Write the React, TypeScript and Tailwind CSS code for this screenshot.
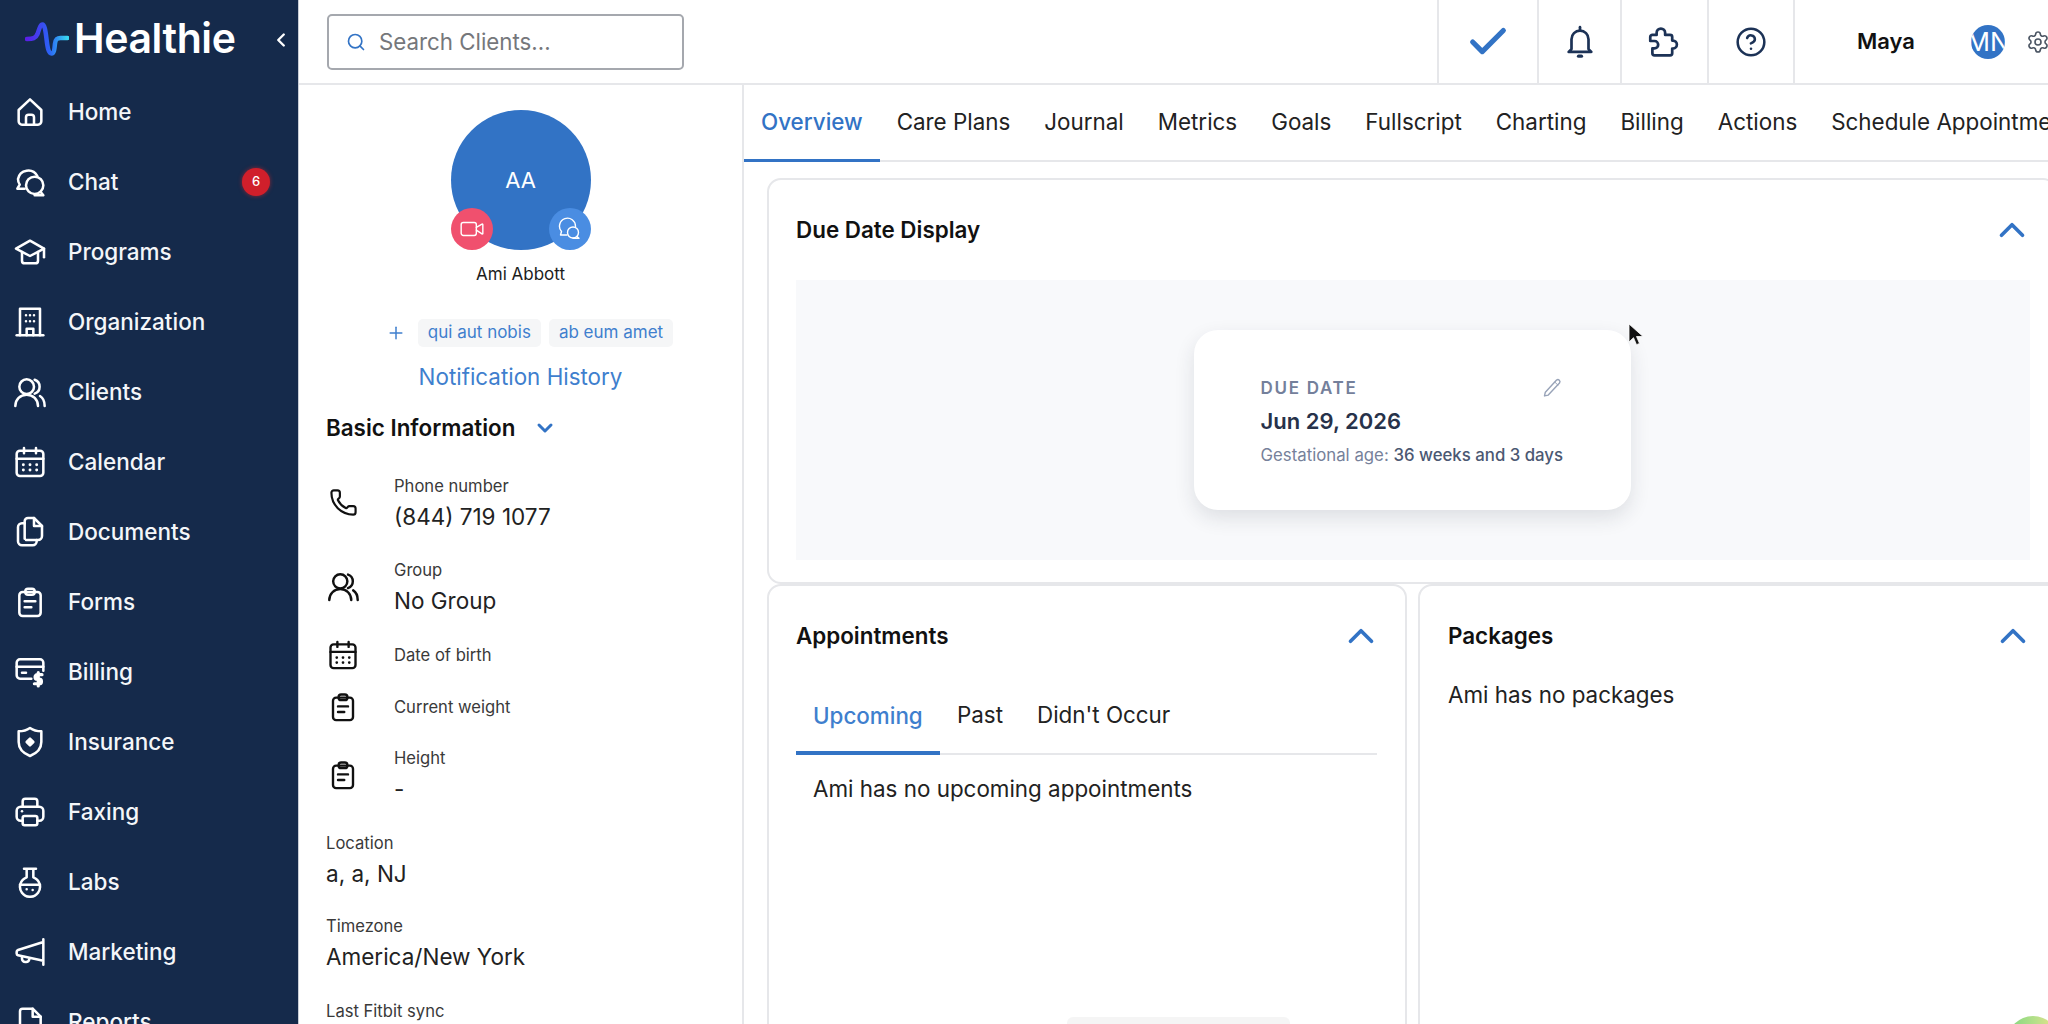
import React from 'react';
import { Check, ChevronDown, ChevronLeft, ChevronUp, CircleHelp, Phone, Plus, Search, Settings, Video } from 'lucide-react';

type IconProps = { className?: string };

const Svg: React.FC<IconProps & { children: React.ReactNode }> = ({ className, children }) => (
  <svg viewBox="0 0 24 24" fill="none" stroke="currentColor" strokeWidth={1.9} strokeLinecap="round" strokeLinejoin="round" className={className}>
    {children}
  </svg>
);

const HomeIcon = (p: IconProps) => (
  <Svg {...p}>
    <path d="M3.5 10.5 12 2.500l8.500 8V19a2.500 2.500 0 0 1-2.500 2.500H6A2.500 2.500 0 0 1 3.500 19z" />
    <path d="M9 21.500V16a2 2 0 0 1 2-2h2a2 2 0 0 1 2 2v5.500" />
  </Svg>
);
const ChatIcon = (p: IconProps) => (
  <Svg {...p}>
    <path d="M17.500 7.500A7.800 7.800 0 0 0 3 9.800c0 1.600.5 3 1.300 4.200L2.500 17H8" />
    <circle cx="15.500" cy="14.500" r="6.500" />
    <path d="M20 19.500l2 2.500h-6.500" />
  </Svg>
);
const ProgramsIcon = (p: IconProps) => (
  <Svg {...p}>
    <path d="M12 3.500 1.500 9.500 12 15l10.500-5.500z" />
    <path d="M6 12v6.500a2 2 0 0 0 2 2h8a2 2 0 0 0 2-2V12" />
    <path d="M22.500 9.500V16" />
  </Svg>
);
const BuildingIcon = (p: IconProps) => (
  <Svg {...p}>
    <path d="M2 22h20" />
    <path d="M4.500 22V2h15v20" />
    <path d="M9.500 22v-5h5v5" />
    <path d="M9 7h.01M15 7h.01M9 11.500h.01M15 11.500h.01M12 7h.01M12 11.500h.01" />
  </Svg>
);
const UsersIcon = (p: IconProps) => (
  <Svg {...p}>
    <circle cx="9.500" cy="8" r="5.500" />
    <path d="M1 22.500c0-4.800 3.700-8.500 8.500-8.500s8.500 3.700 8.500 8.500" />
    <path d="M15.500 2.800a5.500 5.500 0 0 1 0 10.400" />
    <path d="M19.500 15c2.200 1.400 3.500 4 3.500 7.500" />
  </Svg>
);
const CalendarIcon = (p: IconProps) => (
  <Svg {...p}>
    <rect x="2" y="3.500" width="20" height="19" rx="2.500" />
    <path d="M2 9.500h20M7.500 1.500v4M16.500 1.500v4" />
    <path d="M7 14h.01M12 14h.01M17 14h.01M7 18h.01M12 18h.01M17 18h.01" strokeWidth={2.200} />
  </Svg>
);
const DocumentsIcon = (p: IconProps) => (
  <Svg {...p}>
    <path d="M8 17V4a2.500 2.500 0 0 1 2.500-2.500H15l6 6V15a3 3 0 0 1-3 3h-9" />
    <path d="M15 1.500V7.500h6" />
    <path d="M8 5.500H6A3 3 0 0 0 3 8.500V19a3 3 0 0 0 3 3h8a3 3 0 0 0 3-3v-1" />
  </Svg>
);
const ClipboardIcon = (p: IconProps) => (
  <Svg {...p}>
    <rect x="4" y="4.500" width="16" height="18" rx="2.500" />
    <rect x="8.500" y="2" width="7" height="4.500" rx="2" />
    <path d="M8 11.500h8M8 16h5" />
  </Svg>
);
const BillingIcon = (p: IconProps) => (
  <Svg {...p}>
    <path d="M22 11V5a2.500 2.500 0 0 0-2.500-2.500h-15A2.500 2.500 0 0 0 2 5v9.500A2.500 2.500 0 0 0 4.500 17H13" />
    <path d="M2 8h20M6 12.500h3" />
    <path d="M21 14h-3.500a1.700 1.700 0 0 0 0 3.400h1.400a1.700 1.700 0 0 1 0 3.400h-3.600M18.200 12.500v10" strokeWidth={2.400} />
  </Svg>
);
const ShieldIcon = (p: IconProps) => (
  <Svg {...p}>
    <path d="M12 1.500c2.500 1.800 5.500 2.500 8.500 2.500v8c0 5-3.500 8.500-8.500 10.500C7 20.500 3.500 17 3.500 12V4C6.500 4 9.500 3.300 12 1.500z" />
    <path d="M12 9.500 14.500 12 12 14.500 9.500 12z" fill="currentColor" />
  </Svg>
);
const PrinterIcon = (p: IconProps) => (
  <Svg {...p}>
    <path d="M6.500 8V4a2 2 0 0 1 2-2h7a2 2 0 0 1 2 2v4" />
    <path d="M6.500 18.500H5a3 3 0 0 1-3-3V11a3 3 0 0 1 3-3h14a3 3 0 0 1 3 3v4.500a3 3 0 0 1-3 3h-1.500" />
    <rect x="6.500" y="15" width="11" height="7" rx="1.500" />
    <path d="M6 11.500h.01" />
  </Svg>
);
const FlaskIcon = (p: IconProps) => (
  <Svg {...p}>
    <path d="M7.500 2h9M9.500 2v6.500a7.500 7.500 0 1 0 5 0V2" />
    <path d="M4.500 14h15" />
    <path d="M9.500 17.500h.01M14 18h.01" />
  </Svg>
);
const MegaphoneIcon = (p: IconProps) => (
  <Svg {...p}>
    <path d="M22 2.500v19M22 4.500 3 10.500a1.500 1.500 0 0 0-1 1.400v1.200a1.500 1.500 0 0 0 1 1.400l19 4" />
    <path d="M6 15.500V17a2.500 2.500 0 0 0 2.500 2.500h.5a2.500 2.500 0 0 0 2.500-2" />
  </Svg>
);
const ReportsIcon = (p: IconProps) => (
  <Svg {...p}>
    <path d="M4.500 4a2 2 0 0 1 2-2H14l6 6v12a2 2 0 0 1-2 2H6.500a2 2 0 0 1-2-2z" />
    <path d="M14 2v6h6" />
  </Svg>
);
const BellIcon = (p: IconProps) => (
  <Svg {...p}>
    <path d="M12 1.500v2" />
    <path d="M6 17V10a6 6 0 0 1 12 0v7l2 2H4z" />
    <path d="M11 22h2" strokeWidth={2.400} />
  </Svg>
);
const PuzzleIcon = (p: IconProps) => (
  <Svg {...p}>
    <path d="M7.500 5.500a3 3 0 0 1 6 0V7h3.500A1.500 1.500 0 0 1 18.500 8.500V11h.5a2.800 2.800 0 0 1 0 5.600h-.5V20a1.500 1.500 0 0 1-1.500 1.500H6A1.500 1.500 0 0 1 4.500 20v-3.500H6a2.600 2.600 0 0 0 0-5.200H3V8.500A1.500 1.500 0 0 1 4.500 7h3z" />
  </Svg>
);
const BubblesIcon = (p: IconProps) => (
  <Svg {...p}>
    <path d="M17.500 9.500A8 8 0 1 0 3.500 14.500L2.500 18H9" strokeWidth={1.400} />
    <circle cx="15" cy="15.500" r="5.500" strokeWidth={1.400} />
    <path d="M19 19.500l2 1.800h-6" strokeWidth={1.400} />
  </Svg>
);
const SlimPencilIcon = (p: IconProps) => (
  <Svg {...p}>
    <path d="M17.500 2.500a2.500 2.500 0 0 1 3.500 3.500L7.500 20.500 3 21.500l1-4.500z" strokeWidth={1.700} />
    <path d="M15.500 5l3.500 3.500" strokeWidth={1.200} />
  </Svg>
);

const navItems: { label: string; icon: (p: IconProps) => React.ReactNode; badge?: number }[] = [
  { label: 'Home', icon: HomeIcon },
  { label: 'Chat', icon: ChatIcon, badge: 6 },
  { label: 'Programs', icon: ProgramsIcon },
  { label: 'Organization', icon: BuildingIcon },
  { label: 'Clients', icon: UsersIcon },
  { label: 'Calendar', icon: CalendarIcon },
  { label: 'Documents', icon: DocumentsIcon },
  { label: 'Forms', icon: ClipboardIcon },
  { label: 'Billing', icon: BillingIcon },
  { label: 'Insurance', icon: ShieldIcon },
  { label: 'Faxing', icon: PrinterIcon },
  { label: 'Labs', icon: FlaskIcon },
  { label: 'Marketing', icon: MegaphoneIcon },
  { label: 'Reports', icon: ReportsIcon },
];

const tabs = ['Overview', 'Care Plans', 'Journal', 'Metrics', 'Goals', 'Fullscript', 'Charting', 'Billing', 'Actions', 'Schedule Appointment'];

const Sidebar = () => (
  <aside className="w-[299px] h-[1024px] shrink-0 overflow-hidden bg-[#152a4b] border-r border-[#c9cdd6] text-white">
    <div className="h-[77px] flex items-center pl-[25px] pr-[6px]">
      <svg viewBox="0 0 44 34" className="w-[44px] h-[34px] shrink-0" fill="none">
        <defs>
          <linearGradient id="pulse" x1="0" y1="0" x2="1" y2="0">
            <stop offset="0" stopColor="#5a1fe8" />
            <stop offset="0.55" stopColor="#2b62f5" />
            <stop offset="1" stopColor="#38d6f0" />
          </linearGradient>
        </defs>
        <path d="M2 17c6 0 8.500-.5 10.500-5 2-6 3-9.500 5-9.500s3 6 4 14.500 2 14.500 5 14.500 3-6 3.500-10 2-5.500 5.500-5.500h7" stroke="url(#pulse)" strokeWidth={4.500} strokeLinecap="round" />
      </svg>
      <span className="ml-[5px] text-[41px] leading-none font-semibold tracking-[-0.4px]">Healthie</span>
      <ChevronLeft className="ml-auto w-[22px] h-[22px] mt-[3px]" strokeWidth={2.6} />
    </div>
    <nav>
      {navItems.map(({ label, icon: Icon, badge }) => (
        <div key={label} className="h-[70px] flex items-center pl-[14px] pr-[28px]">
          <Icon className="w-[32px] h-[32px] shrink-0" />
          <span className="ml-[22px] text-[22.5px] font-medium text-[#f4f6f9]">{label}</span>
          {badge && (
            <span className="ml-auto w-[28px] h-[28px] rounded-full bg-[#d01f2b] flex items-center justify-center text-[13px] font-medium shadow-[0_0_4px_rgba(220,38,38,0.6)]">
              {badge}
            </span>
          )}
        </div>
      ))}
    </nav>
  </aside>
);

const TopBar = () => (
  <header className="h-[85px] shrink-0 flex items-stretch border-b-2 border-[#e6e7ea] bg-white">
    <div className="flex-1 flex items-center pl-[28px]">
      <div className="w-[357px] h-[56px] rounded-[5px] border-2 border-[#a5a8ae] flex items-center pl-[17px]">
        <Search className="w-[20px] h-[20px] text-[#3273c5]" strokeWidth={2} />
        <span className="ml-[13px] text-[22.3px] text-[#75777b]">Search Clients...</span>
      </div>
    </div>
    <div className="w-[100px] border-l-2 border-[#e6e7ea] flex items-center justify-center">
      <Check className="w-[46px] h-[46px] text-[#3273c5]" strokeWidth={2.7} />
    </div>
    <div className="w-[83px] border-l-2 border-[#e6e7ea] flex items-center justify-center text-[#1c3256]">
      <BellIcon className="w-[34px] h-[34px]" />
    </div>
    <div className="w-[87px] border-l-2 border-[#e6e7ea] flex items-center justify-center pr-[4px] text-[#1c3256]">
      <PuzzleIcon className="w-[34px] h-[34px]" />
    </div>
    <div className="w-[86px] border-l-2 border-[#e6e7ea] flex items-center justify-center text-[#1c3256]">
      <CircleHelp className="w-[32px] h-[32px]" strokeWidth={1.9} />
    </div>
    <div className="w-[255px] border-l-2 border-[#e6e7ea] flex items-center overflow-hidden">
      <span className="ml-[62px] text-[22px] font-semibold text-[#111]">Maya</span>
      <div className="ml-[56px] w-[34px] h-[34px] shrink-0 rounded-full bg-[#3273c5] overflow-hidden flex items-center justify-center text-[26px] text-white">
        <span className="whitespace-nowrap">MN</span>
      </div>
      <Settings className="ml-[21px] w-[24px] h-[24px] shrink-0 text-[#4b5563]" strokeWidth={1.6} />
    </div>
  </header>
);

const InfoRow = ({ icon, label, value, className }: { icon: React.ReactNode; label: string; value?: string; className: string }) => (
  <div className={`flex items-center ${className}`}>
    <div className="w-[68px] shrink-0">
      <div className="w-[34px] flex justify-center">{icon}</div>
    </div>
    <div>
      <div className="text-[16.6px] leading-[26px] text-[#3a3a3a]">{label}</div>
      {value && <div className="text-[22.5px] leading-[36px] text-[#222]">{value}</div>}
    </div>
  </div>
);

const Field = ({ label, value, className }: { label: string; value?: string; className?: string }) => (
  <div className={className}>
    <div className="text-[16.6px] leading-[26px] text-[#3a3a3a]">{label}</div>
    {value && <div className="text-[22.5px] leading-[36px] text-[#222]">{value}</div>}
  </div>
);

const ClientPanel = () => (
  <section className="w-[445px] shrink-0 border-r-2 border-[#e6e7ea] overflow-hidden bg-white">
    <div className="pt-[25px] flex flex-col items-center">
      <div className="relative w-[140px] h-[140px] rounded-full bg-[#3273c5] flex items-center justify-center text-[22px] text-white">
        AA
        <span className="absolute left-0 bottom-0 w-[42px] h-[42px] rounded-full bg-[#f0506e] flex items-center justify-center">
          <Video className="w-[26px] h-[26px]" strokeWidth={1.3} />
        </span>
        <span className="absolute right-0 bottom-0 w-[42px] h-[42px] rounded-full bg-[#4a8de2] flex items-center justify-center">
          <BubblesIcon className="w-[24px] h-[24px]" />
        </span>
      </div>
      <div className="mt-[12px] text-[17px] leading-[24px] text-[#1c1c1c]">Ami Abbott</div>
      <div className="mt-[33px] flex items-center gap-[8px] pl-[18px] text-[17px] text-[#3f7fce]">
        <Plus className="w-[20px] h-[20px] mr-[4px]" strokeWidth={1.8} />
        <span className="h-[28px] px-[10px] rounded-[5px] bg-[#f5f6f7] flex items-center">qui aut nobis</span>
        <span className="h-[28px] px-[10px] rounded-[5px] bg-[#f5f6f7] flex items-center">ab eum amet</span>
      </div>
      <div className="mt-[14px] text-[22.4px] leading-[32px] text-[#3f7fce]">Notification History</div>
    </div>
    <div className="pl-[27px]">
      <div className="mt-[19px] flex items-center text-[22.4px] leading-[32px] font-semibold text-[#111]">
        Basic Information
        <ChevronDown className="ml-[18px] w-[24px] h-[24px] text-[#3273c5]" strokeWidth={3} />
      </div>
      <InfoRow className="mt-[29px]" icon={<Phone className="w-[29px] h-[29px] -mt-[4px] text-[#111]" strokeWidth={1.8} />} label="Phone number" value="(844) 719 1077" />
      <InfoRow className="mt-[22px]" icon={<UsersIcon className="w-[31px] h-[31px] -mt-[3px] text-[#111]" />} label="Group" value="No Group" />
      <InfoRow className="mt-[21px]" icon={<CalendarIcon className="w-[30px] h-[30px] text-[#111]" />} label="Date of birth" />
      <InfoRow className="mt-[22px]" icon={<ClipboardIcon className="w-[30px] h-[30px] text-[#111]" />} label="Current weight" />
      <InfoRow className="mt-[23px]" icon={<ClipboardIcon className="w-[30px] h-[30px] -mt-[3px] text-[#111]" />} label="Height" value="-" />
      <Field className="mt-[23px]" label="Location" value="a, a, NJ" />
      <Field className="mt-[21px]" label="Timezone" value="America/New York" />
      <Field className="mt-[23px]" label="Last Fitbit sync" />
    </div>
  </section>
);

const CardHeader = ({ title }: { title: string }) => (
  <div className="flex items-center justify-between h-[32px]">
    <h2 className="text-[22.4px] leading-[32px] font-semibold text-[#111]">{title}</h2>
    <ChevronUp className="w-[42px] h-[42px] -mr-[5px] text-[#3273c5]" strokeWidth={2.1} />
  </div>
);

const Overview = () => (
  <main className="flex-1 min-w-0 overflow-hidden bg-white">
    <div className="h-[77px] border-b-2 border-[#e6e7ea] flex whitespace-nowrap">
      {tabs.map((t, i) => (
        <div
          key={t}
          className={`h-[77px] px-[17px] flex items-center text-[22.4px] shrink-0 border-b-[3px] ${i === 0 ? 'text-[#3273c5] font-medium border-[#3273c5]' : 'text-[#222] border-transparent'}`}
        >
          {t}
        </div>
      ))}
    </div>
    <div className="pl-[23px] pt-[16px] w-[1340px]">
      <div className="w-[1290px] h-[406px] rounded-t-[14px] rounded-bl-[14px] border-2 border-[#e6e7ea] pl-[27px] pr-[27px] pt-[34px]">
        <CardHeader title="Due Date Display" />
        <div className="mt-[34px] h-[280px] w-[1234px] bg-[#f8f9fb] flex items-center justify-center pr-[2px]">
          <div className="w-[437px] h-[180px] rounded-[24px] bg-white shadow-[0_8px_20px_rgba(30,41,59,0.12)] pl-[67px] pr-[69px] pt-[48px]">
            <div className="flex items-center justify-between">
              <span className="text-[17px] leading-[20px] font-semibold tracking-[1.7px] text-[#74809b]">DUE DATE</span>
              <SlimPencilIcon className="w-[20px] h-[20px] text-[#98a3b8]" />
            </div>
            <div className="mt-[6px] text-[22px] leading-[34px] font-semibold text-[#27324a]">Jun 29, 2026</div>
            <div className="mt-[5px] text-[16.8px] leading-[24px] text-[#76819a] whitespace-nowrap">
              Gestational age: <span className="font-medium text-[#4b5872]">36 weeks and 3 days</span>
            </div>
          </div>
        </div>
      </div>
      <div className="flex gap-[11px]">
        <div className="w-[640px] h-[480px] rounded-t-[14px] border-2 border-[#e6e7ea] pl-[27px] pr-[28px] pt-[34px]">
          <CardHeader title="Appointments" />
          <div className="mt-[32px] flex border-b-2 border-[#e6e7ea] h-[71px]">
            <div className="h-[71px] w-[144px] pl-[17px] pb-[3px] flex items-center text-[22.4px] font-medium text-[#3f7fce] border-b-[4px] border-[#3273c5]">Upcoming</div>
            <div className="ml-[17px] pb-[7px] flex items-center text-[22.4px] text-[#222]">Past</div>
            <div className="ml-[34px] pb-[7px] flex items-center text-[22.4px] text-[#222]">Didn't Occur</div>
          </div>
          <p className="mt-[18px] pl-[17px] text-[22.4px] leading-[32px] text-[#222]">Ami has no upcoming appointments</p>
        </div>
        <div className="flex-1 h-[480px] rounded-t-[14px] border-2 border-[#e6e7ea] pl-[28px] pr-[53px] pt-[34px]">
          <CardHeader title="Packages" />
          <p className="mt-[27px] text-[22.4px] leading-[32px] text-[#222]">Ami has no packages</p>
        </div>
      </div>
    </div>
  </main>
);

export default function App() {
  return (
    <div className="relative w-[2048px] h-[1024px] overflow-hidden flex bg-white" style={{ fontFamily: 'Inter, "Noto Sans", sans-serif' }}>
      <Sidebar />
      <div className="flex-1 min-w-0 flex flex-col">
        <TopBar />
        <div className="flex-1 min-h-0 flex">
          <ClientPanel />
          <Overview />
        </div>
      </div>
      {/* mouse pointer from the recording */}
      <svg viewBox="0 0 16 24" className="absolute left-[1628px] top-[323px] w-[16px] h-[24px]">
        <path d="M1 1v18l4.500-4.300 3 7 3-1.300-3-6.900H15z" fill="#111" stroke="#fff" strokeWidth={0.8} />
      </svg>
      {/* toast peeking in at the bottom, help bubble in the corner */}
      <div className="absolute left-[1067px] top-[1017px] w-[223px] h-[20px] rounded-t-[6px] bg-[#f5f5f5]" />
      <div className="absolute left-[2007px] top-[1016px] w-[52px] h-[52px] rounded-full bg-[linear-gradient(90deg,#7fd67f,#b6e08a_55%,#f2e08a)] flex items-center justify-center">
        <div className="w-[36px] h-[36px] rounded-full bg-[#7dd3e8]" />
      </div>
    </div>
  );
}
